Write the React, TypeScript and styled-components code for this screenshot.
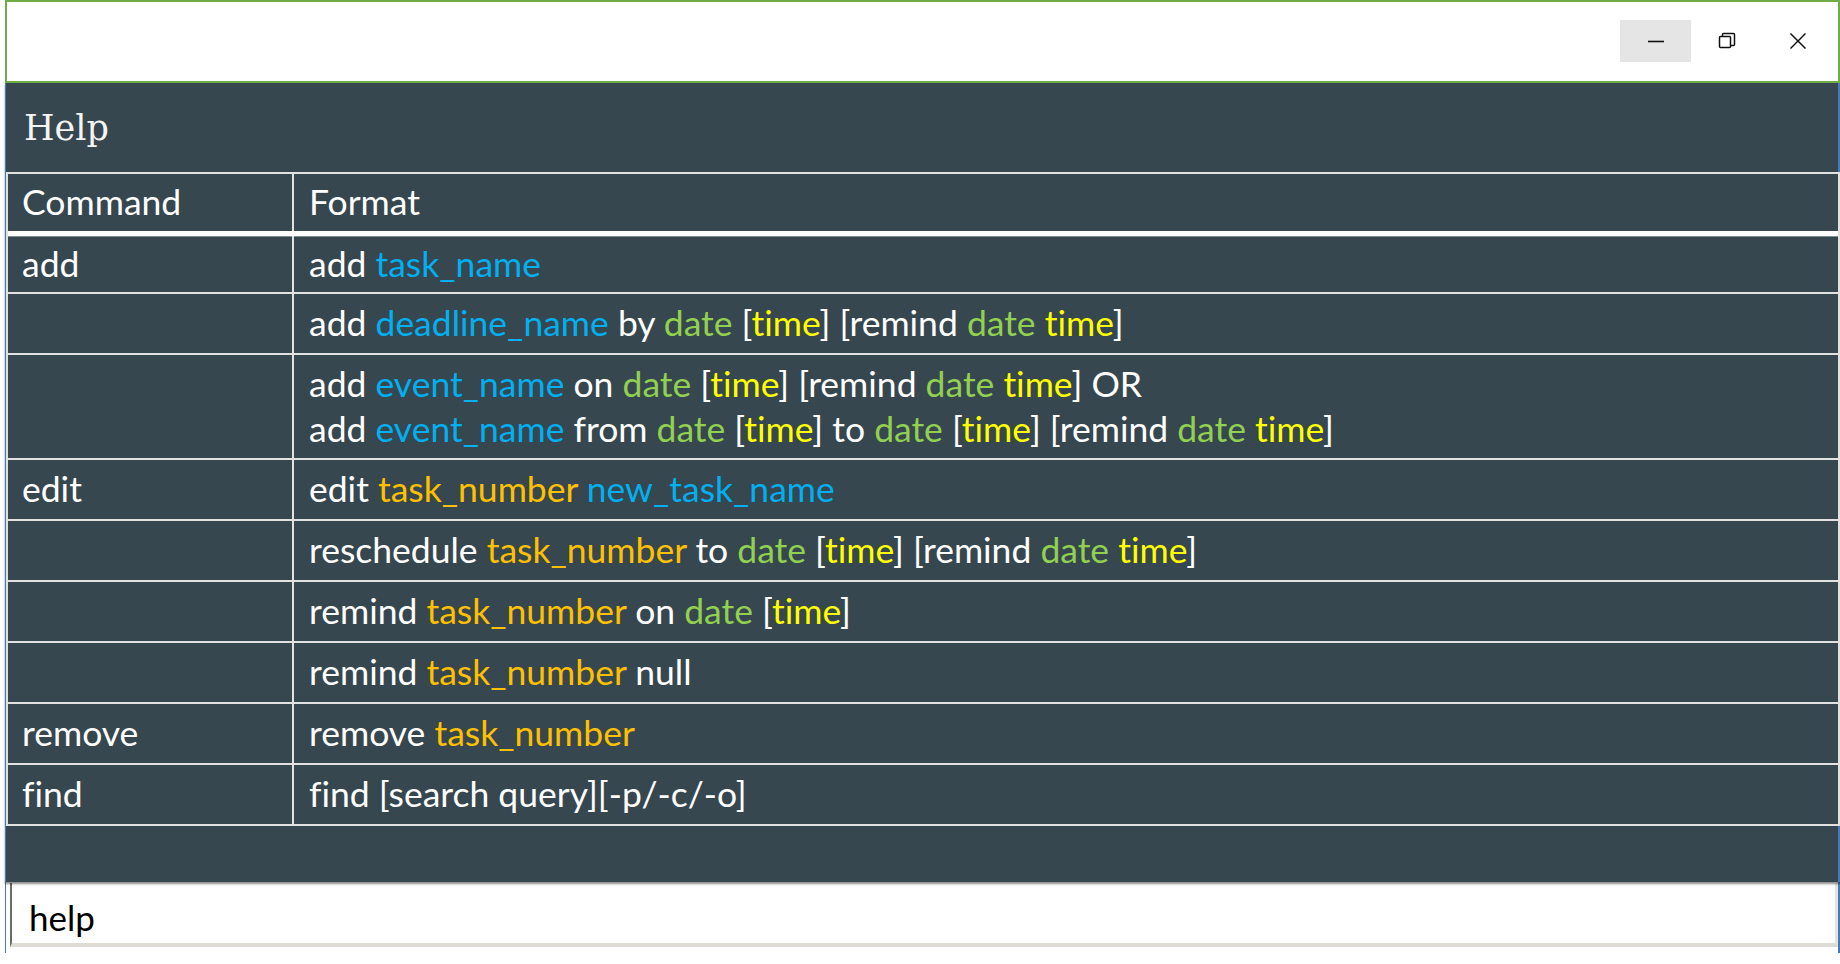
import styled, { createGlobalStyle } from "styled-components";

const GlobalStyle = createGlobalStyle`
  html, body {
    margin: 0;
    padding: 0;
    background: #fff;
  }
  * {
    box-sizing: border-box;
  }
`;

const Window = styled.div`
  width: 1840px;
  height: 964px;
  display: flex;
  flex-direction: column;
  font-family: "Lato", "Open Sans", sans-serif;
  font-variant-ligatures: none;
`;

const TitleBar = styled.div`
  margin-left: 5px;
  height: 83px;
  border: 2px solid #70ad47;
  background: #fff;
  display: flex;
  justify-content: flex-end;
  align-items: flex-start;
  padding: 18px 5px 0 0;
`;

const WinButton = styled.div<{ $active?: boolean }>`
  width: 71px;
  height: 42px;
  display: flex;
  align-items: center;
  justify-content: center;
  background: ${({ $active }) => ($active ? "#e5e5e5" : "transparent")};
`;

const Body = styled.div`
  margin-left: 5px;
  background: #37474f;
  border-left: 1px solid #4a79b5;
  border-right: 2px solid #4a79b5;
  display: flex;
  flex-direction: column;
  height: 799px;
  box-shadow: 0 2px 2px rgba(0, 0, 0, 0.45);
  position: relative;
`;

const PanelTitle = styled.div`
  height: 89px;
  display: flex;
  align-items: center;
  padding-left: 18px;
  font-family: "DejaVu Serif", "Liberation Serif", serif;
  font-size: 35px;
  color: #f4f4f4;
`;

const Table = styled.div`
  border: 2px solid #e2e2e2;
  border-bottom: none;
  margin-right: -2px;
`;

const Row = styled.div<{ $head?: boolean; $h: number }>`
  display: grid;
  grid-template-columns: 286px 1fr;
  height: ${({ $h }) => $h}px;
  border-bottom: ${({ $head }) => ($head ? "5px solid #ffffff" : "2px solid #e2e2e2")};
  box-shadow: ${({ $head }) => ($head ? "0 1px 0 #7f8b91" : "none")};
`;

const Cell = styled.div<{ $first?: boolean }>`
  display: flex;
  flex-direction: column;
  justify-content: center;
  padding-left: ${({ $first }) => ($first ? "14px" : "15px")};
  border-right: ${({ $first }) => ($first ? "2px solid #e2e2e2" : "none")};
  color: #ffffff;
  font-size: 35.5px;
  line-height: 44.5px;
  white-space: nowrap;
`;

const Line = styled.div``;

const tones: Record<string, string> = {
  b: "#00b0f0",
  g: "#92d050",
  y: "#ffff00",
  o: "#ffc000",
};

const Tok = styled.span<{ $tone: string }>`
  color: ${({ $tone }) => tones[$tone] ?? "#ffffff"};
`;

const InputArea = styled.div`
  flex: 1;
  max-height: 71px;
  background: #fff;
  margin-left: 5px;
  border-left: 1px solid #4a79b5;
  border-right: 2px solid #4a79b5;
  padding: 1px 0 0 4px;
`;

const CommandBox = styled.div`
  height: 64px;
  background: #fff;
  border-left: 2px solid #6a6a6a;
  border-bottom: 4px solid #dcdcd4;
  border-right: 3px solid #e4e4de;
  display: flex;
  align-items: center;
  padding: 7px 0 0 17px;
  font-family: "Lato", "Open Sans", sans-serif;
  font-size: 35px;
  color: #000;
`;

type Seg = [string, string];

function parse(src: string): Seg[] {
  // {x|text} marks a coloured token, everything else is white
  const out: Seg[] = [];
  const re = /\{(\w)\|([^}]*)\}/g;
  let last = 0;
  let m: RegExpExecArray | null;
  while ((m = re.exec(src))) {
    if (m.index > last) out.push(["w", src.slice(last, m.index)]);
    out.push([m[1], m[2]]);
    last = re.lastIndex;
  }
  if (last < src.length) out.push(["w", src.slice(last)]);
  return out;
}

const rows: { cmd: string; lines: string[]; h: number }[] = [
  { cmd: "add", lines: ["add {b|task_name}"], h: 58 },
  {
    cmd: "",
    lines: ["add {b|deadline_name} by {g|date} [{y|time}] [remind {g|date} {y|time}]"],
    h: 61,
  },
  {
    cmd: "",
    lines: [
      "add {b|event_name} on {g|date} [{y|time}] [remind {g|date} {y|time}] OR",
      "add {b|event_name} from {g|date} [{y|time}] to {g|date} [{y|time}] [remind {g|date} {y|time}]",
    ],
    h: 105,
  },
  { cmd: "edit", lines: ["edit {o|task_number} {b|new_task_name}"], h: 61 },
  {
    cmd: "",
    lines: ["reschedule {o|task_number} to {g|date} [{y|time}] [remind {g|date} {y|time}]"],
    h: 61,
  },
  { cmd: "", lines: ["remind {o|task_number} on {g|date} [{y|time}]"], h: 61 },
  { cmd: "", lines: ["remind {o|task_number} null"], h: 61 },
  { cmd: "remove", lines: ["remove {o|task_number}"], h: 61 },
  { cmd: "find", lines: ["find [search query][-p/-c/-o]"], h: 61 },
];

function MinIcon() {
  return (
    <svg width="18" height="18" viewBox="0 0 18 18">
      <line x1="1" y1="9.5" x2="17" y2="9.5" stroke="#111" strokeWidth="1.6" />
    </svg>
  );
}

function RestoreIcon() {
  return (
    <svg width="18" height="18" viewBox="0 0 18 18" fill="none" stroke="#111" strokeWidth="1.5">
      <rect x="1.5" y="4.5" width="11" height="11" rx="1" />
      <path d="M4.5 4.5V2.5a1 1 0 0 1 1-1h10a1 1 0 0 1 1 1v10a1 1 0 0 1-1 1h-3" />
    </svg>
  );
}

function CloseIcon() {
  return (
    <svg width="18" height="18" viewBox="0 0 18 18" stroke="#111" strokeWidth="1.5">
      <line x1="1.5" y1="1.5" x2="16.5" y2="16.5" />
      <line x1="16.5" y1="1.5" x2="1.5" y2="16.5" />
    </svg>
  );
}

export default function App() {
  return (
    <>
      <GlobalStyle />
      <Window>
        <TitleBar>
          <WinButton $active>
            <MinIcon />
          </WinButton>
          <WinButton>
            <RestoreIcon />
          </WinButton>
          <WinButton>
            <CloseIcon />
          </WinButton>
        </TitleBar>
        <Body>
          <PanelTitle>Help</PanelTitle>
          <Table>
            <Row $head $h={62}>
              <Cell $first>Command</Cell>
              <Cell>Format</Cell>
            </Row>
            {rows.map((r, i) => (
              <Row key={i} $h={r.h}>
                <Cell $first>{r.cmd}</Cell>
                <Cell>
                  {r.lines.map((l, j) => (
                    <Line key={j}>
                      {parse(l).map(([t, s], k) => (
                        <Tok key={k} $tone={t}>
                          {s}
                        </Tok>
                      ))}
                    </Line>
                  ))}
                </Cell>
              </Row>
            ))}
          </Table>
        </Body>
        <InputArea>
          <CommandBox>help</CommandBox>
        </InputArea>
      </Window>
    </>
  );
}
